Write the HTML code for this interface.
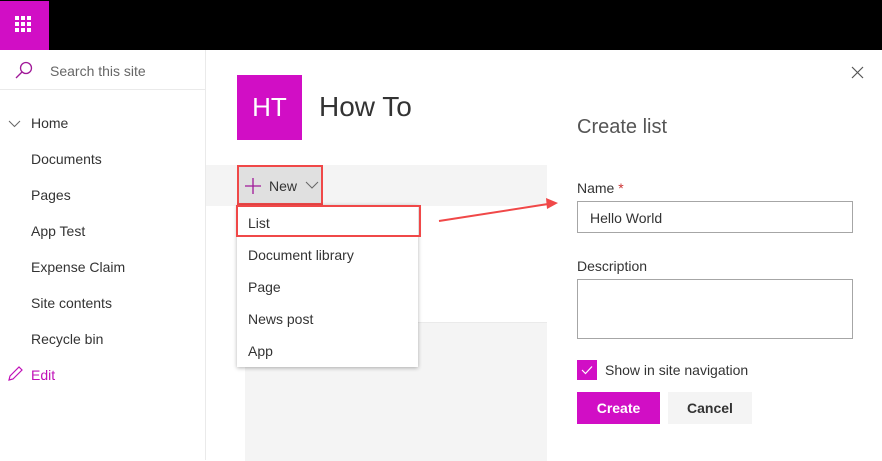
<!DOCTYPE html>
<html><head><style>
body{margin:0;width:882px;height:460px;position:relative;overflow:hidden;background:#fff;font-family:"Liberation Sans",sans-serif;color:#333}
.a{position:absolute}
.nav{font-size:14px;color:#333}
</style></head><body>
<div class="a" style="left:0;top:0;width:882px;height:50px;background:#000"></div>
<div class="a" style="left:0;top:1px;width:49px;height:49px;background:#d10ec5"></div>
<svg class="a" style="left:15px;top:16px" width="18" height="18"><g fill="#fff">
<rect x="0" y="0" width="4" height="4"/><rect x="6" y="0" width="4" height="4"/><rect x="12" y="0" width="4" height="4"/>
<rect x="0" y="6" width="4" height="4"/><rect x="6" y="6" width="4" height="4"/><rect x="12" y="6" width="4" height="4"/>
<rect x="0" y="12" width="4" height="4"/><rect x="6" y="12" width="4" height="4"/><rect x="12" y="12" width="4" height="4"/></g></svg>
<div class="a" style="left:205px;top:50px;width:1px;height:410px;background:#eaeaea"></div>
<div class="a" style="left:0;top:89px;width:205px;height:1px;background:#eaeaea"></div>
<svg class="a" style="left:14px;top:61px" width="20" height="20"><circle cx="12" cy="7" r="5.5" fill="none" stroke="#a01898" stroke-width="1.3"/><line x1="8" y1="11" x2="2" y2="17" stroke="#a01898" stroke-width="1.3"/></svg>
<div class="a nav" style="left:50px;top:63px;color:#666">Search this site</div>
<svg class="a" style="left:8px;top:119px" width="14" height="10"><path d="M1 2 L6.5 7.5 L12 2" fill="none" stroke="#666" stroke-width="1"/></svg>
<div class="a nav" style="left:31px;top:115px">Home</div>
<div class="a nav" style="left:31px;top:151px">Documents</div>
<div class="a nav" style="left:31px;top:187px">Pages</div>
<div class="a nav" style="left:31px;top:223px">App Test</div>
<div class="a nav" style="left:31px;top:259px">Expense Claim</div>
<div class="a nav" style="left:31px;top:295px">Site contents</div>
<div class="a nav" style="left:31px;top:331px">Recycle bin</div>
<svg class="a" style="left:7px;top:366px" width="16" height="16"><path d="M2 14 L3 10 L12 1 L15 4 L6 13 Z" fill="none" stroke="#c010b8" stroke-width="1.2"/></svg>
<div class="a nav" style="left:31px;top:367px;color:#c010b8">Edit</div>
<div class="a" style="left:237px;top:75px;width:65px;height:65px;background:#d10ec5;color:#fff;font-size:26px;line-height:65px;text-align:center">HT</div>
<div class="a" style="left:319px;top:91px;font-size:28px;color:#333;font-weight:300">How To</div>
<div class="a" style="left:206px;top:165px;width:341px;height:41px;background:#f4f4f4"></div>
<div class="a" style="left:237px;top:165px;width:82px;height:36px;background:#e0e0e0;border:2px solid #f04848"></div>
<svg class="a" style="left:244px;top:177px" width="18" height="18"><path d="M9 1V17M1 9H17" stroke="#a01898" stroke-width="1.3"/></svg>
<div class="a" style="left:269px;top:178px;font-size:14px">New</div>
<svg class="a" style="left:305px;top:181px" width="14" height="9"><path d="M1 1 L7 7 L13 1" fill="none" stroke="#666"/></svg>
<div class="a" style="left:245px;top:322px;width:302px;height:138px;background:#f4f4f4;border-top:1px solid #eaeaea"></div>
<div class="a" style="left:237px;top:205px;width:181px;height:162px;background:#fff;box-shadow:0 1px 4px rgba(0,0,0,.3)"></div>
<div class="a" style="left:236px;top:205px;border:2px solid #f04848;box-sizing:border-box;width:185px;height:32px"></div>
<div class="a nav" style="left:248px;top:215px">List</div>
<div class="a nav" style="left:248px;top:247px">Document library</div>
<div class="a nav" style="left:248px;top:279px">Page</div>
<div class="a nav" style="left:248px;top:311px">News post</div>
<div class="a nav" style="left:248px;top:343px">App</div>
<div class="a" style="left:547px;top:50px;width:335px;height:410px;background:#fff"></div>
<svg class="a" style="left:851px;top:66px" width="13" height="13"><path d="M1 1L12 12M12 1L1 12" stroke="#555" stroke-width="1.2"/></svg>
<div class="a" style="left:577px;top:116px;font-size:20px;color:#555;font-weight:300">Create list</div>
<div class="a" style="left:577px;top:180px;font-size:14px">Name <span style="color:#c33">*</span></div>
<div class="a" style="left:577px;top:201px;width:274px;height:30px;border:1px solid #a6a6a6"></div>
<div class="a" style="left:590px;top:210px;font-size:14px">Hello World</div>
<div class="a" style="left:577px;top:258px;font-size:14px">Description</div>
<div class="a" style="left:577px;top:279px;width:274px;height:58px;border:1px solid #a6a6a6"></div>
<div class="a" style="left:577px;top:360px;width:20px;height:20px;background:#d10ec5"></div>
<svg class="a" style="left:581px;top:365px" width="12" height="10"><path d="M1 5 L4.5 8.5 L11 1.5" fill="none" stroke="#fff" stroke-width="1.2"/></svg>
<div class="a" style="left:605px;top:362px;font-size:14px">Show in site navigation</div>
<div class="a" style="left:577px;top:392px;width:83px;height:32px;background:#d10ec5;color:#fff;font-size:14px;font-weight:bold;line-height:32px;text-align:center">Create</div>
<div class="a" style="left:668px;top:392px;width:84px;height:32px;background:#f4f4f4;color:#333;font-size:14px;font-weight:bold;line-height:32px;text-align:center">Cancel</div>
<svg class="a" style="left:430px;top:195px" width="135" height="35"><line x1="9" y1="26" x2="118" y2="9" stroke="#f04848" stroke-width="2"/><path d="M128 8 L116 3 L117 14 Z" fill="#f04848"/></svg>
</body></html>
